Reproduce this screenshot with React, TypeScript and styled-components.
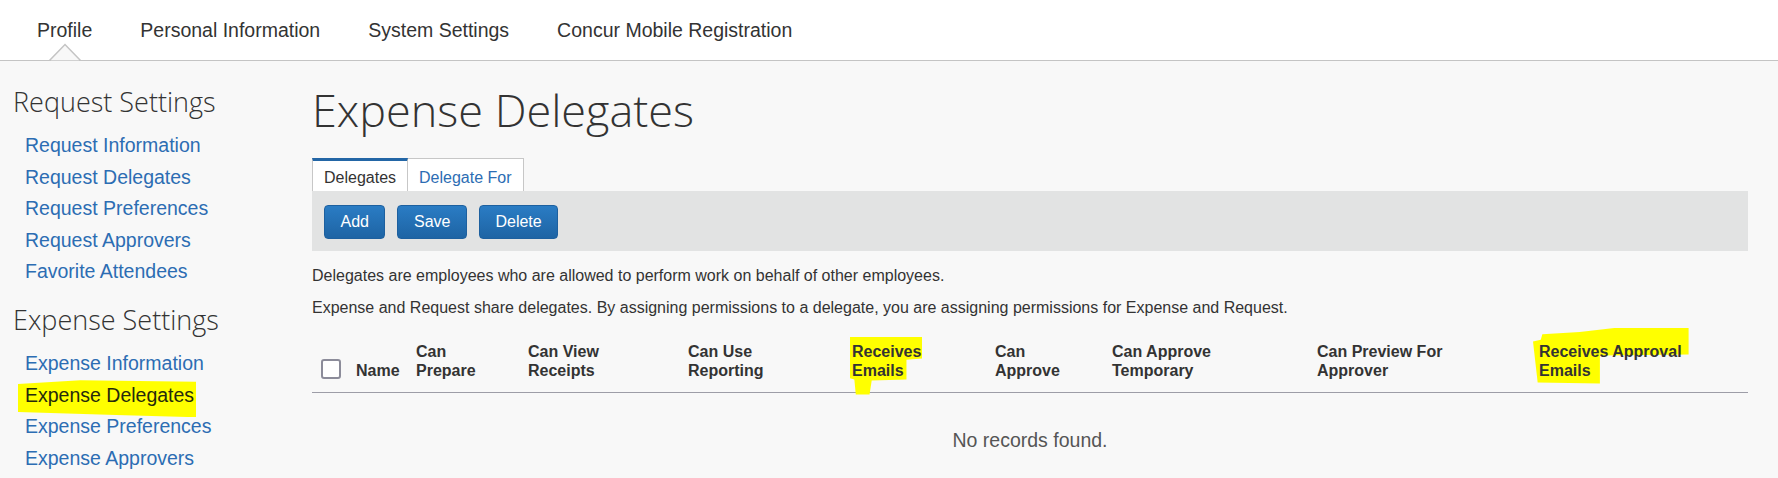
import React from 'react';
import styled, { createGlobalStyle } from 'styled-components';

const GlobalStyle = createGlobalStyle`
  html, body {
    margin: 0;
    padding: 0;
    background: #f8f8f8;
    font-family: 'Liberation Sans', Arial, sans-serif;
    color: #333;
  }
`;

const Page = styled.div`
  width: 1778px;
  min-height: 478px;
`;

const TopNav = styled.nav`
  display: flex;
  height: 60px;
  padding-left: 13px;
  background: #fff;
  border-bottom: 1px solid #c4c4c4;
`;

const NavItem = styled.a<{ $active?: boolean }>`
  position: relative;
  display: flex;
  align-items: center;
  padding: 0 24px;
  font-size: 19.5px;
  color: #333;
  text-decoration: none;
  cursor: pointer;
`;

const Caret = styled.svg`
  position: absolute;
  left: 50%;
  bottom: -1px;
  width: 34px;
  height: 18px;
  margin-left: -17px;
`;

const Body = styled.div`
  display: grid;
  grid-template-columns: 312px 1fr;
`;

const SideBar = styled.aside`
  padding: 24px 0 0 13px;
`;

const SideHeading = styled.h2<{ $first?: boolean }>`
  margin: ${(p) => (p.$first ? '0' : '15px')} 0 11px;
  font-family: 'Open Sans', 'Liberation Sans', sans-serif;
  font-weight: 300;
  font-size: 27px;
  line-height: 34px;
  color: #333;
`;

const LinkList = styled.div`
  display: flex;
  flex-direction: column;
  padding-left: 12px;
`;

const SideLink = styled.a`
  display: block;
  font-size: 19.5px;
  line-height: 31.6px;
  color: #2c6db3;
  text-decoration: none;
  cursor: pointer;
`;

const Marker = styled.span<{ $inset: string; $clip: string; $ink?: string }>`
  position: relative;
  display: inline-block;
  isolation: isolate;
  color: ${(p) => p.$ink || 'inherit'};

  &::before {
    content: '';
    position: absolute;
    inset: ${(p) => p.$inset};
    background: #ffff00;
    clip-path: polygon(${(p) => p.$clip});
    z-index: -1;
  }
`;

const Main = styled.main`
  padding: 24px 30px 0 0;
`;

const Title = styled.h1`
  margin: 0 0 23px;
  font-family: 'Open Sans', 'Liberation Sans', sans-serif;
  font-weight: 300;
  font-size: 45px;
  line-height: 50px;
  color: #333;
`;

const TabRow = styled.div`
  display: flex;
  align-items: flex-end;
`;

const Tab = styled.button<{ $active?: boolean }>`
  height: 33px;
  padding: ${(p) => (p.$active ? '7px' : '9px')} 11px 3px;
  border: 1px solid #c7c7c7;
  border-bottom: none;
  border-top: ${(p) => (p.$active ? '3px solid #2366a6' : '1px solid #c7c7c7')};
  border-left: ${(p) => (p.$active ? '1px solid #c7c7c7' : 'none')};
  background: #fff;
  font-family: 'Liberation Sans', Arial, sans-serif;
  font-size: 16px;
  line-height: 20px;
  color: ${(p) => (p.$active ? '#333' : '#2c6db3')};
  cursor: pointer;
`;

const Toolbar = styled.div`
  display: flex;
  align-items: center;
  gap: 12px;
  height: 60px;
  box-sizing: border-box;
  padding: 0 12px;
  background: #e2e3e3;
`;

const Button = styled.button`
  height: 34px;
  margin-top: 2px;
  padding: 0 15.5px;
  border: 1px solid #1d609f;
  border-radius: 4px;
  background: linear-gradient(#2a7cc4, #1e64a4);
  color: #fff;
  font-family: 'Liberation Sans', Arial, sans-serif;
  font-size: 16px;
  cursor: pointer;
`;

const Note = styled.p<{ $gap: number }>`
  margin: ${(p) => p.$gap}px 0 0;
  font-size: 16px;
  line-height: 20px;
  color: #333;
`;

const Table = styled.div`
  margin-top: 24px;
`;

const HeadRow = styled.div`
  display: grid;
  grid-template-columns: 36px 60px 112px 160px 164px 143px 117px 205px 222px 1fr;
  align-items: end;
  padding-bottom: 12px;
  border-bottom: 1px solid #9d9da7;
`;

const HeadCell = styled.div`
  padding-left: 8px;
  font-weight: bold;
  font-size: 16px;
  line-height: 19px;
  color: #333;
`;

const CheckCell = styled.div`
  display: flex;
  padding: 0 0 1px 9px;
`;

const CheckBox = styled.span`
  width: 20px;
  height: 20px;
  box-sizing: border-box;
  border: 2px solid #8c8c9a;
  border-radius: 3px;
  background: #fff;
`;

const Empty = styled.div`
  padding-top: 35px;
  text-align: center;
  font-size: 19.5px;
  line-height: 24px;
  color: #555;
`;

const requestLinks = [
  'Request Information',
  'Request Delegates',
  'Request Preferences',
  'Request Approvers',
  'Favorite Attendees',
];

const navItems = ['Profile', 'Personal Information', 'System Settings', 'Concur Mobile Registration'];

export default function App() {
  return (
    <Page>
      <GlobalStyle />
      <TopNav>
        {navItems.map((item, i) => (
          <NavItem key={item} $active={i === 0}>
            {item}
            {i === 0 && (
              <Caret viewBox="0 0 34 18">
                <polygon points="1,18 17,1.5 33,18" fill="#f8f8f8" stroke="#c4c4c4" strokeWidth="1.5" />
              </Caret>
            )}
          </NavItem>
        ))}
      </TopNav>

      <Body>
        <SideBar>
          <SideHeading $first>Request Settings</SideHeading>
          <LinkList>
            {requestLinks.map((l) => (
              <SideLink key={l}>{l}</SideLink>
            ))}
          </LinkList>
          <SideHeading>Expense Settings</SideHeading>
          <LinkList>
            <SideLink>Expense Information</SideLink>
            <SideLink>
              <Marker
                $ink="#262a0c"
                $inset="0 -2px -6px -7px"
                $clip="0 12%, 35% 2%, 100% 6%, 100% 100%, 55% 94%, 0 86%"
              >
                Expense Delegates
              </Marker>
            </SideLink>
            <SideLink>Expense Preferences</SideLink>
            <SideLink>Expense Approvers</SideLink>
          </LinkList>
        </SideBar>

        <Main>
          <Title>Expense Delegates</Title>
          <TabRow>
            <Tab $active>Delegates</Tab>
            <Tab>Delegate For</Tab>
          </TabRow>
          <Toolbar>
            <Button>Add</Button>
            <Button>Save</Button>
            <Button>Delete</Button>
          </Toolbar>
          <Note $gap={14.5}>Delegates are employees who are allowed to perform work on behalf of other employees.</Note>
          <Note $gap={12}>
            Expense and Request share delegates. By assigning permissions to a delegate, you are assigning permissions
            for Expense and Request.
          </Note>

          <Table>
            <HeadRow>
              <CheckCell>
                <CheckBox />
              </CheckCell>
              <HeadCell>Name</HeadCell>
              <HeadCell>Can<br />Prepare</HeadCell>
              <HeadCell>Can View<br />Receipts</HeadCell>
              <HeadCell>Can Use<br />Reporting</HeadCell>
              <HeadCell>
                <Marker
                  $inset="-5px -1px -15px -2px"
                  $clip="0 0, 100% 0, 100% 38%, 78% 40%, 78% 74%, 30% 76%, 27% 100%, 8% 100%, 6% 74%, 0 72%"
                >
                  Receives<br />Emails
                </Marker>
              </HeadCell>
              <HeadCell>Can<br />Approve</HeadCell>
              <HeadCell>Can Approve<br />Temporary</HeadCell>
              <HeadCell>Can Preview For<br />Approver</HeadCell>
              <HeadCell>
                <Marker
                  $inset="-14px -7px -4px -6px"
                  $clip="6% 12%, 30% 8%, 55% 0, 100% 0, 100% 48%, 43% 50%, 43% 100%, 3% 98%, 0 25%, 5% 22%"
                >
                  Receives Approval<br />Emails
                </Marker>
              </HeadCell>
            </HeadRow>
            <Empty>No records found.</Empty>
          </Table>
        </Main>
      </Body>
    </Page>
  );
}
